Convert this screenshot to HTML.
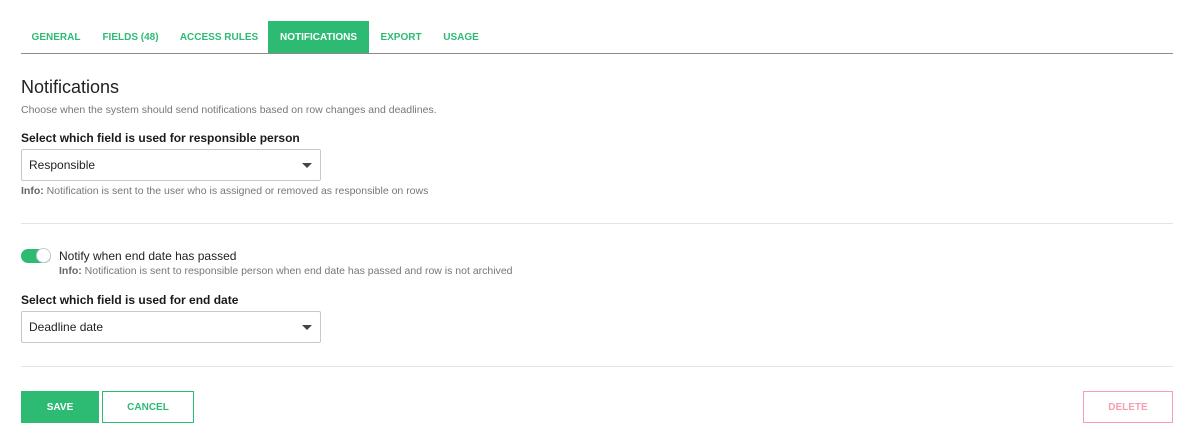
<!DOCTYPE html>
<html><head><style>
body{margin:0;width:1193px;height:444px;background:#fff;font-family:"Liberation Sans",sans-serif;color:#222;position:relative;overflow:hidden}
.a{position:absolute}
.tab{position:absolute;top:21px;height:32px;line-height:33px;font-size:10px;font-weight:bold;color:#2dbb74;text-align:center}
.sel{position:absolute;left:21px;height:30px;border:1px solid #c8c8c8;border-radius:2px;font-size:12px;line-height:31px;padding-left:7px;box-sizing:content-box;width:291px}
.sel:after{content:"";position:absolute;right:8px;top:13px;border-left:5px solid transparent;border-right:5px solid transparent;border-top:5px solid #444}
.lbl{font-size:12px;font-weight:bold;color:#1a1a1a}
.info{font-size:10.5px;color:#777}
.info b{color:#666}
.btn{position:absolute;top:391px;height:32px;line-height:32px;font-size:10px;font-weight:bold;text-align:center;box-sizing:border-box}
</style></head><body>
<div class="tab" style="left:21px;width:70px">GENERAL</div>
<div class="tab" style="left:91px;width:79px">FIELDS (48)</div>
<div class="tab" style="left:170px;width:98px">ACCESS RULES</div>
<div class="tab" style="left:268px;width:101px;background:#2dbb74;color:#fff">NOTIFICATIONS</div>
<div class="tab" style="left:369px;width:64px">EXPORT</div>
<div class="tab" style="left:433px;width:56px">USAGE</div>
<div class="a" style="left:21px;top:53px;width:1152px;height:1px;background:#8a8a8a"></div>
<div class="a" style="left:21px;top:77px;font-size:18px;color:#222">Notifications</div>
<div class="a info" style="left:21px;top:104px">Choose when the system should send notifications based on row changes and deadlines.</div>
<div class="a lbl" style="left:21px;top:131px">Select which field is used for responsible person</div>
<div class="sel" style="top:149px">Responsible</div>
<div class="a info" style="left:21px;top:185px"><b>Info:</b> Notification is sent to the user who is assigned or removed as responsible on rows</div>
<div class="a" style="left:21px;top:223px;width:1152px;height:1px;background:#e3e3e3"></div>
<div class="a" style="left:21px;top:249px;width:30px;height:14px;border-radius:7px;background:#2dbb74"></div>
<div class="a" style="left:36px;top:248px;border-radius:50%;background:#fff;border:1px solid #ccc;box-sizing:border-box;width:15px;height:15px"></div>
<div class="a" style="left:59px;top:249px;font-size:12px;color:#222">Notify when end date has passed</div>
<div class="a info" style="left:59px;top:265px"><b>Info:</b> Notification is sent to responsible person when end date has passed and row is not archived</div>
<div class="a lbl" style="left:21px;top:293px">Select which field is used for end date</div>
<div class="sel" style="top:311px">Deadline date</div>
<div class="a" style="left:21px;top:366px;width:1152px;height:1px;background:#e3e3e3"></div>
<div class="btn" style="left:21px;width:78px;background:#2dbb74;color:#fff;line-height:33px">SAVE</div>
<div class="btn" style="left:102px;width:92px;border:1px solid #2dbb74;color:#2dbb74;line-height:31px">CANCEL</div>
<div class="btn" style="left:1083px;width:90px;border:1px solid #f5a0b0;color:#f5a0b0;line-height:31px">DELETE</div>
</body></html>
